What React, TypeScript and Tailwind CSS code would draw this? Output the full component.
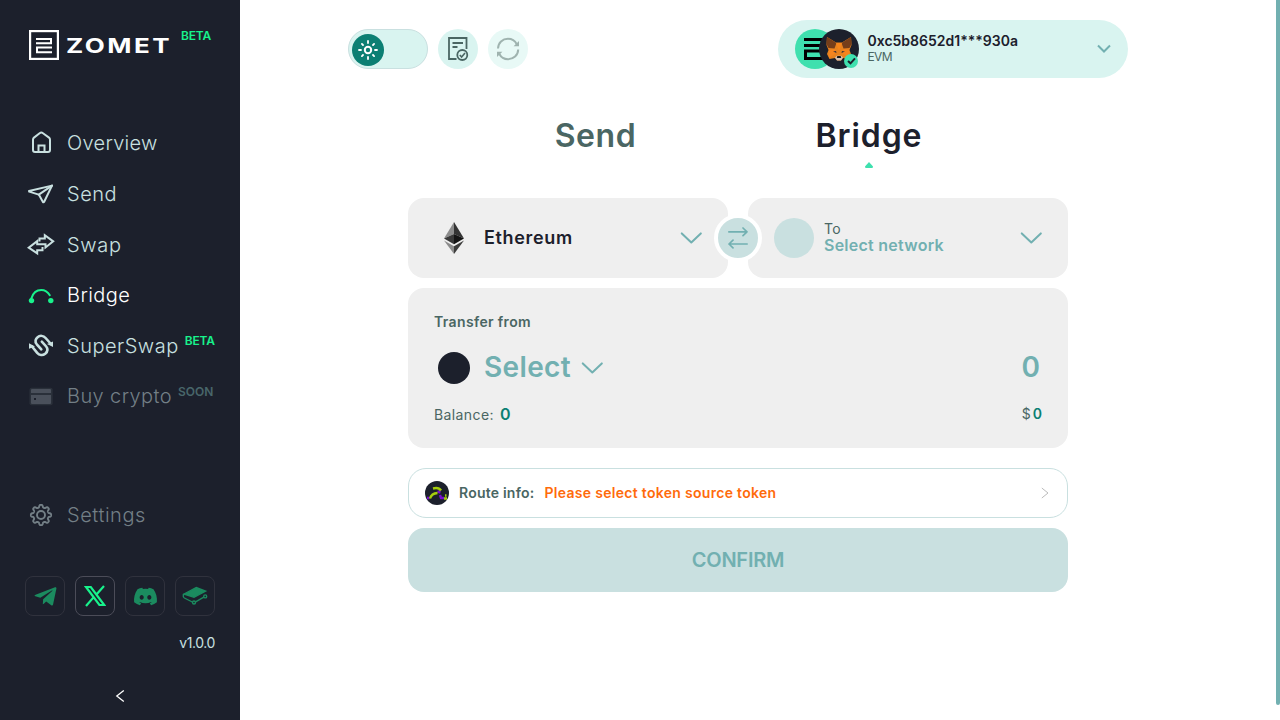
import type { ReactNode } from 'react';
import { FaDiscord, FaTelegramPlane } from 'react-icons/fa';

function HomeIcon() {
  return (
    <svg width="28" height="28" viewBox="0 0 28 28" fill="none" stroke="currentColor" strokeWidth="2" strokeLinejoin="round">
      <path d="M6 10.8Q6 9.5 7 8.6L12.6 4.2Q14.3 3 16 4.2L22 8.6Q23 9.5 23 10.8V21Q23 23 21 23H8Q6 23 6 21Z" />
      <path d="M11.5 23V16.5H17.5V23" strokeLinejoin="miter" />
    </svg>
  );
}

function PlaneIcon() {
  return (
    <svg width="28" height="28" viewBox="0 0 28 28" fill="none" stroke="currentColor" strokeWidth="2" strokeLinejoin="round" strokeLinecap="round">
      <path d="M2 11L25 5.6L17.2 21.8Q16.6 22.9 15.8 21.8L11.8 14.6L2.2 11.6Z" />
      <path d="M11.8 14.6L25 5.6" />
    </svg>
  );
}

function SwapIcon() {
  return (
    <svg width="28" height="28" viewBox="0 0 28 28" fill="none" stroke="currentColor" strokeWidth="2">
      <path d="M12.5 11.5V8.5H17.8V5.2L26.2 11.4L18.5 17.5V14.3H10.2V11.1L1.7 17.6L10.2 23.4V20.2H15.5V17.1" />
    </svg>
  );
}

function BridgeIcon() {
  return (
    <svg width="28" height="28" viewBox="0 0 28 28" fill="none" stroke="currentColor" strokeWidth="2" strokeLinecap="round">
      <path d="M4.3 17.5C6 11.8 9.8 9 14.3 9C18 9 20.8 10.9 22.8 14.2" />
      <circle cx="4.5" cy="19.6" r="2.7" fill="currentColor" stroke="none" />
      <circle cx="23.8" cy="19.6" r="2.7" fill="currentColor" stroke="none" />
    </svg>
  );
}

function SuperSwapIcon() {
  return (
    <svg width="28" height="28" viewBox="0 0 28 28" fill="none" stroke="currentColor" strokeWidth="2.6" strokeLinecap="round">
      <path d="M5 14.5L10.2 20.8C12.3 23.2 15.7 23.7 18.2 21.7C20.7 19.6 21 16.8 19.2 14.5L14.8 9.6" />
      <path d="M23.5 11.5L18.6 6C16.5 3.6 13 3.2 10.6 5.2C8.2 7.2 8 10 9.8 12.3L14.3 17.3" />
      <path d="M2 11.2V16.7L8 14.4Z" fill="currentColor" stroke="none" />
      <path d="M26 9.6V15L20 11.9Z" fill="currentColor" stroke="none" />
    </svg>
  );
}

function CardIcon() {
  return (
    <svg width="28" height="28" viewBox="0 0 28 28">
      <rect x="2.5" y="5.8" width="23.2" height="17.4" rx="2" fill="#2a303a" />
      <path d="M4 8Q4 7 5 7H23Q24 7 24 8V11H4Z" fill="#4a505b" />
      <path d="M4 13H24V21Q24 22 23 22H5Q4 22 4 21Z" fill="#4a505b" />
      <rect x="7" y="16" width="2" height="2" fill="#1c202c" />
    </svg>
  );
}

/* Outline of an eight-lobed cog, sampled in polar coordinates. */
const cogPoints = Array.from({ length: 160 }, (_, i) => {
  const a = (i / 160) * Math.PI * 2;
  const r = 8.9 + 1.25 * Math.tanh(2 * Math.cos(8 * a));
  return `${(14 + r * Math.sin(a)).toFixed(2)},${(14 - r * Math.cos(a)).toFixed(2)}`;
}).join(' ');

function CogIcon() {
  return (
    <svg width="28" height="28" viewBox="0 0 28 28" fill="none" stroke="currentColor" strokeWidth="1.9" strokeLinejoin="round">
      <polygon points={cogPoints} />
      <circle cx="14" cy="14" r="4" />
    </svg>
  );
}

function NavItem({ icon, label, tag, color, tagColor, tracking }: { icon: ReactNode; label: string; tag?: string; color: string; tagColor?: string; tracking: string }) {
  return (
    <a className={`flex h-[50.6px] items-center ${color}`}>
      <div className="flex w-10 shrink-0">{icon}</div>
      <span className={`text-[20px] leading-[30px] font-light whitespace-nowrap ${tracking}`}>{label}</span>
      {tag && <span className={`-mt-[9px] ml-1.5 text-[12px] leading-[18px] font-semibold ${tagColor}`}>{tag}</span>}
    </a>
  );
}

function Chevron() {
  return (
    <svg width="22" height="12" viewBox="0 0 22 12" fill="none" stroke="#72b0b1" strokeWidth="2" strokeLinecap="round" strokeLinejoin="round">
      <path d="M1.8 1.4L11.3 10.4L20.8 1.4" />
    </svg>
  );
}

function Social({ children, active }: { children: ReactNode; active?: boolean }) {
  return (
    <a className={`flex size-10 items-center justify-center rounded-lg border ${active ? 'border-[#4b4c58] text-[#18f28c]' : 'border-[#30323d] text-[#1b8b5f]'}`}>
      {children}
    </a>
  );
}

function Sidebar() {
  return (
    <aside className="flex h-full w-60 shrink-0 flex-col bg-[#1c202c]">
      <div className="flex h-[118px] items-start pt-[30px] pl-[29px]">
        <svg width="30" height="30" viewBox="0 0 30 30" fill="none" stroke="#fff" strokeWidth="2">
          <rect x="1" y="1" width="28" height="28" strokeWidth="2.4" />
          <path d="M7 9H22V13.2H7M23 17.5H8V22.2H23" />
        </svg>
        <div className="mt-1 ml-[7px] w-[106px]">
          <span className="inline-block origin-left scale-x-[1.3] text-[20px] leading-6 font-bold tracking-[1.9px] text-white">ZOMET</span>
        </div>
        <span className="-mt-[3px] ml-[9px] text-[12px] leading-[18px] font-semibold tracking-[-0.2px] text-[#18f28c]">BETA</span>
      </div>
      <nav className="flex flex-col pl-[27px]">
        <NavItem icon={<HomeIcon />} label="Overview" color="text-[#c9e0e0]" tracking="tracking-[0.3px]" />
        <NavItem icon={<PlaneIcon />} label="Send" color="text-[#c9e0e0]" tracking="tracking-[0.5px]" />
        <NavItem icon={<SwapIcon />} label="Swap" color="text-[#c9e0e0]" tracking="tracking-[0.7px] pt-px" />
        <NavItem icon={<div className="text-[#18f28c]"><BridgeIcon /></div>} label="Bridge" color="text-white" tracking="tracking-[0.4px]" />
        <NavItem icon={<SuperSwapIcon />} label="SuperSwap" tag="BETA" color="text-[#c9e0e0]" tagColor="text-[#18f28c] tracking-[-0.2px]" tracking="tracking-[0.5px]" />
        <NavItem icon={<CardIcon />} label="Buy crypto" tag="SOON" color="text-[#737f86]" tagColor="text-[#48666a]" tracking="tracking-[0.4px]" />
      </nav>
      <div className="mt-[68px] pl-[27px]">
        <NavItem icon={<CogIcon />} label="Settings" color="text-[#737f86]" tracking="tracking-[0.55px]" />
      </div>
      <div className="mt-[36px] flex gap-2.5 pl-[25px]">
        <Social><FaTelegramPlane className="size-[25px]" /></Social>
        <Social active>
          <svg width="22" height="22" viewBox="0 0 22 22" fill="none" stroke="currentColor" strokeWidth="2.2">
            <path d="M2 2H6.8L20.2 20H15.4ZM20 1L12.2 9.8M9.5 12.4L2 21" />
          </svg>
        </Social>
        <Social><FaDiscord className="size-[25px]" /></Social>
        <Social>
          <svg width="26" height="20" viewBox="0 0 26 20" fill="none" stroke="currentColor" strokeWidth="1.4">
            <path d="M2 8L14.3 1.5L23.6 5.2L12 11.3Z" fill="currentColor" />
            <path d="M2 8C.9 9.5 1 11.2 2.4 12L10.3 16M13.6 15.8L21.8 11.2" />
            <circle cx="12" cy="16.5" r="1.5" />
            <circle cx="23.2" cy="10.4" r="1.5" />
          </svg>
        </Social>
      </div>
      <div className="mt-4 flex justify-end pr-[25px]">
        <span className="text-[14px] leading-[22px] tracking-[-0.4px] text-[#c9e0e0]">v1.0.0</span>
      </div>
      <div className="mt-9 flex justify-center">
        <svg width="10" height="12" viewBox="0 0 10 12" fill="none" stroke="#fff" strokeWidth="1.3">
          <path d="M8.8 .6L1.8 6L8.8 11.4" />
        </svg>
      </div>
    </aside>
  );
}

function Fox() {
  return (
    <svg width="26" height="26" viewBox="0 0 26 26">
      <path d="M1 1L10 6.5H16L25 1L25.5 9L23.5 14L25 18L22.5 23L17 22L15 24.5H11L9 22L3.5 23L1 18L2.5 14L.5 9Z" fill="#e8821e" />
      <path d="M1 1L10.5 7L8.5 12.5L2.5 12L.5 8ZM25 1L15.5 7L17.5 12.5L23.5 12L25.5 8Z" fill="#763e1a" />
      <path d="M3 14L8.5 13L10 17L3 22ZM23 14L17.5 13L16 17L23 22Z" fill="#f5841f" />
      <path d="M7 15.5L10 15L10.5 17ZM19 15.5L16 15L15.5 17Z" fill="#39313b" />
      <path d="M10 7L13 15L16 7Z" fill="#f6851b" />
      <path d="M9 21.5L11 19.8H15L17 21.5L15 24.5H11Z" fill="#d7c1b3" />
      <path d="M11.3 20H14.7L15.2 22H10.8Z" fill="#161616" />
    </svg>
  );
}

function TopBar() {
  return (
    <header className="flex h-[58px] items-center">
      <div className="flex items-center gap-2.5">
        <div className="flex h-10 w-20 items-center rounded-full border border-[#c9e0e0] bg-[#d9f4f0] pt-0.5 pl-[3px]">
          <div className="flex size-8 items-center justify-center rounded-full bg-[#0c7f73]">
            <svg width="20" height="20" viewBox="0 0 20 20" fill="none" stroke="#fff" strokeWidth="2" strokeLinecap="round">
              <circle cx="10" cy="10" r="3.2" />
              <path d="M10 1V3M10 17V19M1 10H3M17 10H19M3.9 3.9L5 5M15 15L16.1 16.1M3.9 16.1L5 15M15 5L16.1 3.9" strokeWidth="1.8" />
            </svg>
          </div>
        </div>
        <div className="flex size-10 items-center justify-center rounded-full bg-[#d9f4f0]">
          <svg width="22" height="24" viewBox="0 0 22 24" fill="none" stroke="#4a6663" strokeWidth="1.8">
            <path d="M9.5 22H2V1H19.5V12M5.5 6H16M5.5 10H10.5" />
            <circle cx="15.3" cy="18" r="5" />
            <path d="M12.8 18L14.6 20L18 16" strokeWidth="1.6" />
          </svg>
        </div>
        <div className="flex size-10 items-center justify-center rounded-full bg-[#e8f9f6]">
          <svg width="24" height="24" viewBox="0 0 24 24" fill="none" stroke="#9fb3af" strokeWidth="2">
            <path d="M2 11.5C2.2 5.6 6.5 1.8 12 1.8C15.8 1.8 19 3.8 20.6 7M22.2 12.5C22 18.4 17.5 22.2 12 22.2C8.2 22.2 5 20.2 3.4 17" />
            <path d="M23 4V9.2H17.6ZM1 20V14.8H6.4Z" fill="#9fb3af" stroke="none" />
          </svg>
        </div>
      </div>
      <div className="ml-[250px] flex h-[58px] w-[350px] items-center rounded-full bg-[#d9f4f0] pr-[17px] pl-[17px]">
        <div className="flex w-16 shrink-0">
          <div className="flex size-10 shrink-0 items-center justify-center rounded-full bg-[#3fe0ae]">
            <svg width="22" height="22" viewBox="0 0 22 22" fill="none" stroke="#000" strokeWidth="3">
              <path d="M0 1.5H22M0 7.5H22M0 13H20M1.5 13V20.5H22" />
            </svg>
          </div>
          <div className="relative -ml-4 flex size-10 shrink-0 items-center justify-center rounded-full bg-[#1c202c]">
            <Fox />
            <div className="absolute right-px bottom-px flex size-[14px] items-center justify-center rounded-full bg-[#3fe0ae]">
              <svg width="9" height="8" viewBox="0 0 9 8" fill="none" stroke="#1c202c" strokeWidth="2">
                <path d="M1 4L3.5 6.3L8 1.3" />
              </svg>
            </div>
          </div>
        </div>
        <div className="ml-[8.5px] flex flex-col">
          <span className="self-start text-[14px] leading-4 font-semibold text-[#1c202c]">0xc5b8652d1***930a</span>
          <span className="self-start text-[12px] leading-4 tracking-[-0.6px] text-[#4a6663]">EVM</span>
        </div>
        <svg className="ml-auto" width="14" height="10" viewBox="0 0 14 10" fill="none" stroke="#72b0b1" strokeWidth="2">
          <path d="M1 1.5L7 7.5L13 1.5" />
        </svg>
      </div>
    </header>
  );
}

function NetworkRow() {
  return (
    <div className="flex h-20">
      <div className="flex w-80 items-center rounded-2xl bg-[#efefef] pr-[26px] pl-9">
        <svg width="20" height="32" viewBox="0 0 20 32">
          <path d="M10 0L0 16.5L10 12Z" fill="#8c8c8c" />
          <path d="M10 0L20 16.5L10 12Z" fill="#343434" />
          <path d="M10 12L0 16.5L10 22.3Z" fill="#393939" />
          <path d="M10 12L20 16.5L10 22.3Z" fill="#141414" />
          <path d="M0 18.4L10 24.2V32Z" fill="#8c8c8c" />
          <path d="M20 18.4L10 24.2V32Z" fill="#3c3c3b" />
        </svg>
        <span className="ml-5 text-[18px] leading-7 font-semibold tracking-[0.65px] text-[#1c202c]">Ethereum</span>
        <div className="ml-auto"><Chevron /></div>
      </div>
      <div className="z-10 -mx-3.5 my-auto flex size-12 shrink-0 items-center justify-center rounded-full border-4 border-white bg-[#c9e0e0]">
        <svg width="20" height="22" viewBox="0 0 20 22" fill="none" stroke="#72b0b1" strokeWidth="1.7" strokeLinecap="round" strokeLinejoin="round">
          <path d="M.8 4.8H19M15 1L19 4.8L15 8.6M19.2 17H1M5 13.2L1 17L5 20.8" />
        </svg>
      </div>
      <div className="flex w-80 items-center rounded-2xl bg-[#efefef] px-[26px]">
        <div className="size-10 rounded-full bg-[#c9e0e0]" />
        <div className="ml-2.5 flex flex-col pb-[3px]">
          <span className="self-start text-[14px] leading-4 tracking-[0.4px] text-[#4a6663]">To</span>
          <span className="text-[16px] leading-4 font-semibold tracking-[0.25px] text-[#72b0b1]">Select network</span>
        </div>
        <div className="ml-auto"><Chevron /></div>
      </div>
    </div>
  );
}

function TransferCard() {
  return (
    <div className="mt-2.5 flex h-40 flex-col rounded-2xl bg-[#efefef] px-[26px] pt-[23px]">
      <div className="flex h-[22px] items-center">
        <span className="text-[14px] leading-[22px] font-semibold tracking-[0.35px] text-[#4a6663]">Transfer from</span>
      </div>
      <div className="mt-[14px] flex h-10 items-center pr-0.5 pl-1">
        <div className="mt-0.5 size-8 rounded-full bg-[#1c202c]" />
        <span className="ml-3.5 text-[28px] leading-10 font-semibold tracking-[0.35px] text-[#72b0b1]">Select</span>
        <div className="mt-0.5 ml-[10px]"><Chevron /></div>
        <span className="ml-auto text-[28px] leading-10 font-semibold text-[#72b0b1]">0</span>
      </div>
      <div className="mt-[16px] flex h-[22px] items-center text-[#4a6663]">
        <span className="mt-0.5 text-[14px] leading-[22px] tracking-[0.4px]">Balance:</span>
        <span className="-mt-px ml-1.5 text-[16px] leading-[22px] font-semibold text-[#0c7f73]">0</span>
        <span className="ml-auto text-[14px] leading-[22px]">$</span>
        <span className="ml-0.5 text-[14px] leading-[22px] font-semibold text-[#0c7f73]">0</span>
      </div>
    </div>
  );
}

export default function App() {
  return (
    <div className="flex h-[720px] w-full overflow-hidden bg-white font-['Inter',sans-serif]">
      <Sidebar />
      <main className="flex min-w-0 flex-1 flex-col pt-5 pl-[108px]">
        <TopBar />
        <div className="ml-[60px] flex w-[660px] flex-col">
          <div className="mt-[35px] flex h-[60px] pl-[51px]">
            <div className="flex w-[273px] justify-center">
              <span className="text-[32px] leading-[46px] font-semibold tracking-[0.6px] text-[#4a6663]">Send</span>
            </div>
            <div className="flex w-[273px] flex-col items-center">
              <span className="pl-px text-[32px] leading-[46px] font-semibold tracking-[0.9px] text-[#1c202c]">Bridge</span>
              <svg className="mt-[3px]" width="8" height="6" viewBox="0 0 8 6"><path d="M4 0L8 4.5Q8 6 7 6H1Q0 6 0 4.5Z" fill="#3fe0ae" /></svg>
            </div>
          </div>
          <div className="mt-[25px]"><NetworkRow /></div>
          <TransferCard />
          <div className="mt-5 flex h-[50px] items-center rounded-[18px] border border-[#c9e0e0] px-4 text-[14px] leading-[22px] font-semibold">
            <svg width="24" height="24" viewBox="0 0 24 24" fill="none" strokeWidth="2.4">
              <circle cx="12" cy="12" r="12" fill="#1c202c" />
              <path d="M2 17H4.5M12.5 10.5L15.5 11.5M15 14L16 17H19" stroke="#7a0fd0" />
              <path d="M5 17.5C6 14 8 12.2 12.5 12M8 7.5C12 6.5 14.5 7.2 16 9.5M19 17.5H22M20 14.5H21.5" stroke="#a6cf0c" />
            </svg>
            <span className="ml-2.5 tracking-[0.22px] text-[#4a6663]">Route info:</span>
            <span className="ml-2.5 tracking-[0.3px] text-[#ff6b0b]">Please select token source token</span>
            <svg className="mr-0.5 ml-auto" width="8" height="12" viewBox="0 0 8 12" fill="none" stroke="#bbb"><path d="M.8 1L7 6L.8 11" /></svg>
          </div>
          <button className="mt-2.5 flex h-16 items-center justify-center rounded-2xl bg-[#c9e0e0]">
            <span className="text-[20px] leading-[30px] font-semibold tracking-[-0.25px] text-[#72b0b1]">CONFIRM</span>
          </button>
        </div>
      </main>
      <div className="h-[705px] w-1 shrink-0 rounded-b bg-[#72b0b1]" />
    </div>
  );
}
